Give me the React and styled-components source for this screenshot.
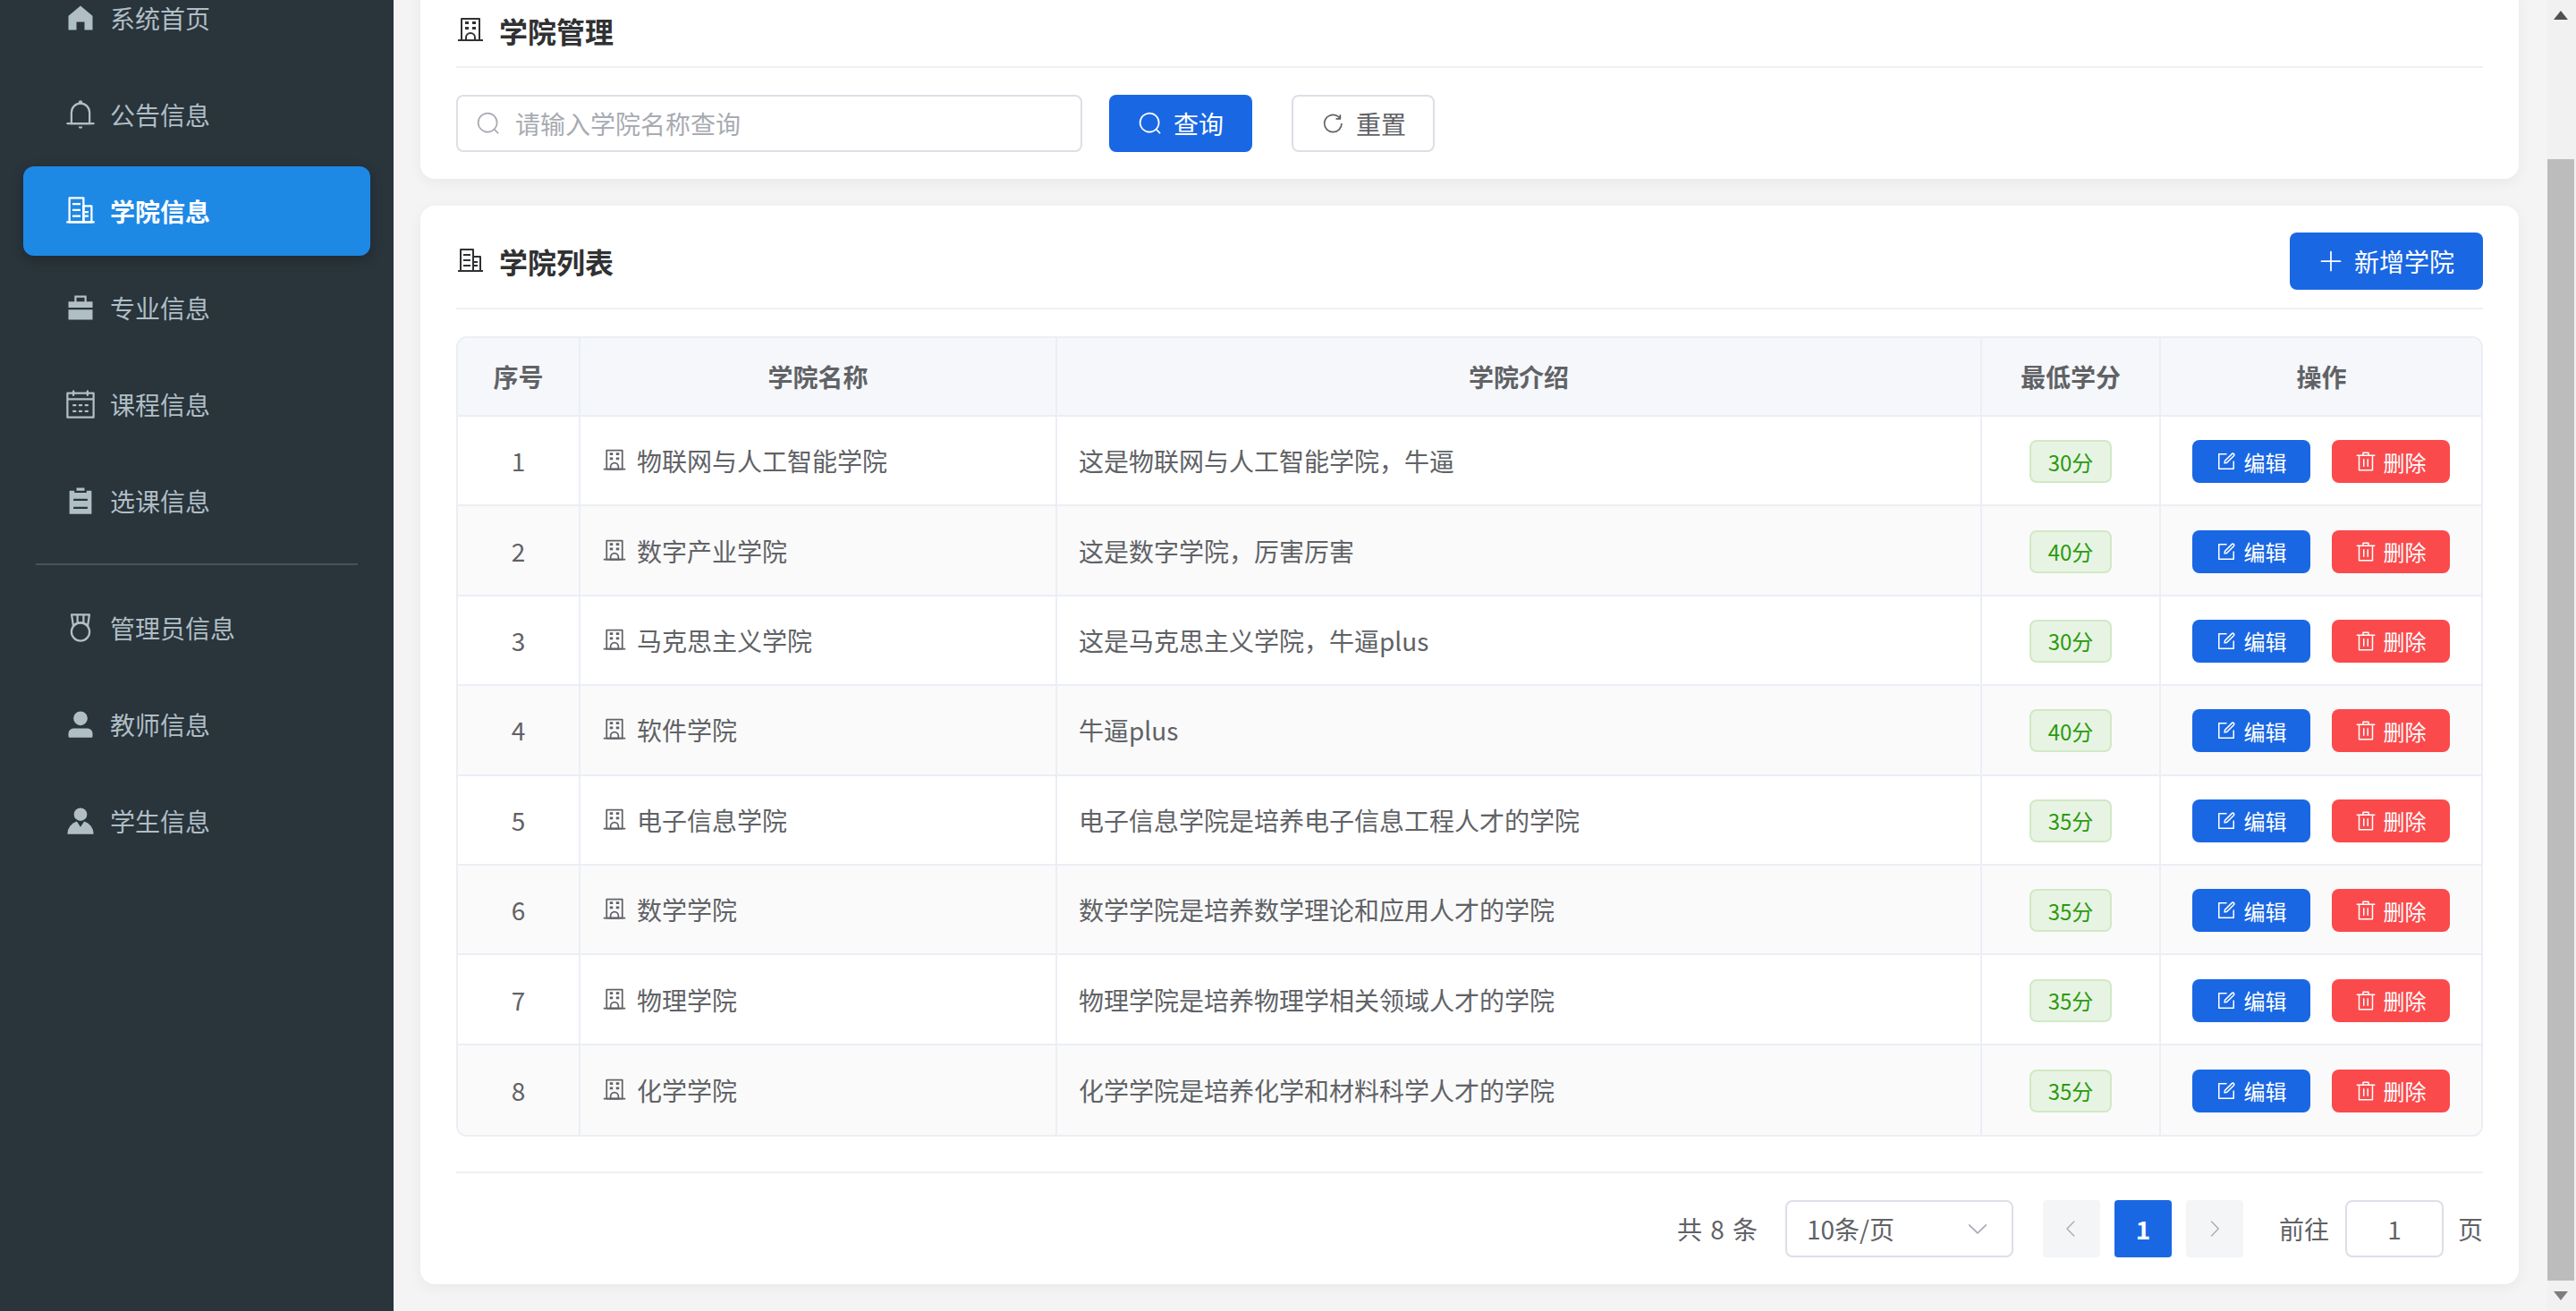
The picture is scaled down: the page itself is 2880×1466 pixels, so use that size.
import React from "react";
import styled, { createGlobalStyle } from "styled-components";

const Global = createGlobalStyle`
  html, body { margin: 0; padding: 0; }
  body { font-family: "Noto Sans CJK SC", "Liberation Sans", sans-serif; }
  * { box-sizing: border-box; }
`;

const Page = styled.div`
  display: flex;
  width: 2880px;
  height: 1466px;
  overflow: hidden;
  background: #f4f4f5;
`;
const Sidebar = styled.aside`
  flex: 0 0 440px;
  background: #29343b;
  padding: 0 26px;
  overflow: hidden;
`;
const Nav = styled.nav`
  display: flex;
  flex-direction: column;
  gap: 8px;
  margin-top: -30px;
`;
const NavItem = styled.a`
  display: flex;
  align-items: center;
  gap: 15px;
  height: 100px;
  padding-left: 46px;
  border-radius: 12px;
  font-size: 28px;
  font-weight: ${(p) => (p.$active ? 700 : 400)};
  color: ${(p) => (p.$active ? "#ffffff" : "#b0bec5")};
  background: ${(p) => (p.$active ? "#1e88e5" : "transparent")};
  box-shadow: ${(p) => (p.$active ? "0 4px 14px rgba(0,0,0,.22)" : "none")};
`;
const NavDivider = styled.div`
  height: 2px;
  margin: 12px 14px 12px;
  background: #47535b;
`;
const Icon = styled.svg`
  flex: none;
  width: ${(p) => p.$size}px;
  height: ${(p) => p.$size}px;
  fill: currentColor;
`;
const Main = styled.main`
  flex: 1;
  min-width: 0;
  display: flex;
  flex-direction: column;
  gap: 30px;
  margin-top: -18px;
  padding: 0 32px 0 30px;
`;
const Card = styled.section`
  background: #fff;
  border-radius: 16px;
  padding: 30px 40px;
  box-shadow: 0 4px 16px rgba(0, 0, 0, 0.05);
`;
const CardHeader = styled.header`
  display: flex;
  align-items: center;
  justify-content: space-between;
  padding-bottom: ${(p) => (p.$tight ? 18 : 20)}px;
  border-bottom: 2px solid #f0f0f0;
  margin-bottom: 30px;
`;
const CardTitle = styled.h2`
  display: flex;
  align-items: center;
  gap: 16px;
  margin: 0;
  height: 44px;
  font-size: 32px;
  line-height: 44px;
  font-weight: 700;
  color: #303133;
`;
const SearchBar = styled.div`
  display: flex;
  align-items: center;
`;
const SearchField = styled.div`
  display: flex;
  align-items: center;
  gap: 16px;
  width: 700px;
  height: 64px;
  padding: 0 20px;
  border: 2px solid #dcdfe6;
  border-radius: 8px;
  margin-right: 30px;
  color: #a8abb2;
  font-size: 28px;
`;
const SearchInput = styled.input`
  flex: 1;
  min-width: 0;
  border: 0;
  outline: 0;
  padding: 0;
  font: inherit;
  font-size: 28px;
  background: transparent;
  &::placeholder { color: #a8abb2; opacity: 1; }
`;
const Button = styled.button`
  display: inline-flex;
  align-items: center;
  justify-content: center;
  gap: 12px;
  height: 64px;
  width: ${(p) => p.$width || 160}px;
  padding: 0;
  border: ${(p) => (p.$plain ? "2px solid #dcdfe6" : "0")};
  border-radius: 8px;
  font: inherit;
  font-size: 28px;
  color: ${(p) => (p.$plain ? "#606266" : "#fff")};
  background: ${(p) => (p.$plain ? "#fff" : "#1a67e4")};
  & + & { margin-left: 44px; }
`;
const TableWrap = styled.div`
  border: 2px solid #ebeef5;
  border-radius: 12px;
  overflow: hidden;
`;
const Table = styled.table`
  width: 100%;
  table-layout: fixed;
  border-collapse: separate;
  border-spacing: 0;
  font-size: 28px;
  color: #606266;
`;
const Th = styled.th`
  height: 88px;
  padding: 0;
  font-weight: 700;
  text-align: center;
  background: #f5f7fa;
  border-bottom: 2px solid #ebeef5;
  border-right: 2px solid #ebeef5;
  &:last-child { border-right: 0; }
`;
const Row = styled.tr`
  height: 100.4px;
  background: ${(p) => (p.$striped ? "#fafafa" : "#fff")};
  &:last-child td { border-bottom: 0; }
`;
const Td = styled.td`
  padding: 0 24px;
  text-align: ${(p) => (p.$center ? "center" : "left")};
  border-bottom: 2px solid #ebeef5;
  border-right: 2px solid #ebeef5;
  &:last-child { border-right: 0; }
`;
const NameCell = styled.div`
  display: flex;
  align-items: center;
  gap: 11px;
`;
const Controls = styled.div`
  display: flex;
  justify-content: center;
  gap: 24px;
  margin-top: 2px;
  padding-right: ${(p) => (p.$nudge ? 2 : 0)}px;
`;
const Badge = styled.span`
  display: inline-flex;
  align-items: center;
  justify-content: center;
  width: 92px;
  height: 48px;
  border: 2px solid #d1e9c6;
  border-radius: 8px;
  background: #e8f4e3;
  color: #2b9a10;
  font-size: 24px;
`;
const ActionButton = styled.button`
  display: inline-flex;
  align-items: center;
  justify-content: center;
  gap: 8px;
  width: 132px;
  height: 48px;
  padding: 0;
  border: 0;
  border-radius: 8px;
  font: inherit;
  font-size: 24px;
  color: #fff;
  background: ${(p) => (p.$danger ? "#fa4a4c" : "#1a67e4")};
`;
const Footer = styled.footer`
  display: flex;
  align-items: center;
  justify-content: flex-end;
  margin-top: 39px;
  padding-top: 30px;
  border-top: 2px solid #f0f0f0;
  font-size: 28px;
  color: #606266;
`;
const Total = styled.span`
  margin-right: 31px;
  word-spacing: 3px;
`;
const PageSize = styled.div`
  display: flex;
  align-items: center;
  justify-content: space-between;
  width: 255px;
  height: 64px;
  padding: 0 24px 0 22px;
  margin-right: 33px;
  border: 2px solid #dcdfe6;
  border-radius: 8px;
  color: #a8abb2;
`;
const PageSizeLabel = styled.span`
  color: #606266;
`;
const Pager = styled.div`
  display: flex;
  gap: 16px;
  margin-right: 40px;
`;
const PageButton = styled.button`
  display: inline-flex;
  align-items: center;
  justify-content: center;
  width: 64px;
  height: 64px;
  padding: 0;
  border: 0;
  border-radius: 4px;
  font: inherit;
  font-size: 28px;
  font-weight: 700;
  color: ${(p) => (p.$active ? "#fff" : "#a8abb2")};
  background: ${(p) => (p.$active ? "#1a67e4" : "#f4f5f7")};
`;
const GoTo = styled.div`
  display: flex;
  align-items: center;
`;
const GoToInput = styled.div`
  display: flex;
  align-items: center;
  justify-content: center;
  width: 110px;
  height: 64px;
  margin: 0 16px 0 18px;
  border: 2px solid #dcdfe6;
  border-radius: 8px;
`;
const Scrollbar = styled.div`
  flex: 0 0 32px;
  display: flex;
  flex-direction: column;
  padding-right: 2px;
  background: #f1f1f1;
`;
const ScrollArrow = styled.div`
  flex: 0 0 34px;
  display: flex;
  align-items: center;
  justify-content: center;
  color: ${(p) => (p.$muted ? "#7d7d7d" : "#505050")};
`;
const ScrollTrack = styled.div`
  flex: 1;
  display: flex;
  padding-top: 144px;
`;
const ScrollThumb = styled.div`
  flex: 1;
  background: #bcbcbc;
`;

const P = {
  home: ["M512 128 128 447.936V896h255.936V640H640v256h255.936V447.936z"],
  bell: [
    "M512 64a64 64 0 0 1 64 64v64H448v-64a64 64 0 0 1 64-64",
    "M256 768h512V448a256 256 0 1 0-512 0zm256-640a320 320 0 0 1 320 320v384H192V448a320 320 0 0 1 320-320",
    "M96 768h832q32 0 32 32t-32 32H96q-32 0-32-32t32-32m352 128h128a64 64 0 0 1-128 0",
  ],
  office: [
    "M192 128v704h384V128zm-32-64h448a32 32 0 0 1 32 32v768a32 32 0 0 1-32 32H160a32 32 0 0 1-32-32V96a32 32 0 0 1 32-32",
    "M256 256h256v64H256zm0 192h256v64H256zm0 192h256v64H256zm384-128h128v64H640zm0 128h128v64H640zM64 832h896v64H64z",
    "M640 384v448h192V384zm-32-64h256a32 32 0 0 1 32 32v512a32 32 0 0 1-32 32H608a32 32 0 0 1-32-32V352a32 32 0 0 1 32-32",
  ],
  briefcase: ["M320 320V128h384v192h192v192H128V320zM128 576h768v320H128zm256-256h256.064V192H384z"],
  calendar: [
    "M128 384v512h768V192H768v32a32 32 0 1 1-64 0v-32H320v32a32 32 0 0 1-64 0v-32H128v128h768v64zm192-256h384V96a32 32 0 1 1 64 0v32h160a32 32 0 0 1 32 32v768a32 32 0 0 1-32 32H96a32 32 0 0 1-32-32V160a32 32 0 0 1 32-32h160V96a32 32 0 0 1 64 0zm-32 384h64a32 32 0 0 1 0 64h-64a32 32 0 0 1 0-64m0 192h64a32 32 0 1 1 0 64h-64a32 32 0 1 1 0-64m192-192h64a32 32 0 0 1 0 64h-64a32 32 0 0 1 0-64m0 192h64a32 32 0 1 1 0 64h-64a32 32 0 1 1 0-64m192-192h64a32 32 0 1 1 0 64h-64a32 32 0 1 1 0-64m0 192h64a32 32 0 1 1 0 64h-64a32 32 0 1 1 0-64",
  ],
  list: ["M704 192h160v736H160V192h160v64h384zM288 512h448v-64H288zm0 256h448v-64H288zm96-576V96h256v96z"],
  medal: [
    "M512 896a256 256 0 1 0 0-512 256 256 0 0 0 0 512m0 64a320 320 0 1 1 0-640 320 320 0 0 1 0 640",
    "M576 128H448v200a286.7 286.7 0 0 1 64-8c19.52 0 40.832 2.688 64 8zm64 0v219.648c24.448 9.088 50.56 20.416 78.4 33.92L757.44 128zm-256 0H266.624l39.04 253.568c27.84-13.504 53.952-24.832 78.336-33.92zM229.312 64h565.376a32 32 0 0 1 31.616 36.864L768 480c-113.792-64-199.104-96-256-96s-142.208 32-256 96l-58.304-379.136A32 32 0 0 1 229.312 64",
  ],
  user: ["M288 320a224 224 0 1 0 448 0 224 224 0 1 0-448 0m544 608H160a32 32 0 0 1-32-32v-96a160 160 0 0 1 160-160h448a160 160 0 0 1 160 160v96a32 32 0 0 1-32 32z"],
  avatar: ["M628.736 528.896A416 416 0 0 1 928 928H96a415.872 415.872 0 0 1 299.264-399.104L512 704zM720 304a208 208 0 1 1-416 0 208 208 0 0 1 416 0"],
  school: [
    "M224 128v704h576V128zm-32-64h640a32 32 0 0 1 32 32v768a32 32 0 0 1-32 32H192a32 32 0 0 1-32-32V96a32 32 0 0 1 32-32",
    "M64 832h896v64H64zm256-640h128v96H320z",
    "M384 832h256v-64a128 128 0 1 0-256 0zm128-256a192 192 0 0 1 192 192v128H320V768a192 192 0 0 1 192-192M320 384h128v96H320zm256-192h128v96H576zm0 192h128v96H576z",
  ],
  edit: [
    "M832 512a32 32 0 1 1 64 0v352a32 32 0 0 1-32 32H160a32 32 0 0 1-32-32V160a32 32 0 0 1 32-32h352a32 32 0 0 1 0 64H192v640h640z",
    "m469.952 554.24 52.8-7.552L847.104 222.4a32 32 0 1 0-45.248-45.248L477.44 501.44l-7.552 52.8zm422.4-422.4a96 96 0 0 1 0 135.808l-331.84 331.84a32 32 0 0 1-18.112 9.088L436.8 623.68a32 32 0 0 1-36.224-36.224l15.104-105.6a32 32 0 0 1 9.024-18.112l331.904-331.84a96 96 0 0 1 135.744 0z",
  ],
  del: ["M160 256H96a32 32 0 0 1 0-64h256V95.936a32 32 0 0 1 32-32h256a32 32 0 0 1 32 32V192h256a32 32 0 1 1 0 64h-64v672a32 32 0 0 1-32 32H192a32 32 0 0 1-32-32zm448-64v-64H416v64zM224 896h576V256H224zm192-128a32 32 0 0 1-32-32V416a32 32 0 0 1 64 0v320a32 32 0 0 1-32 32m192 0a32 32 0 0 1-32-32V416a32 32 0 0 1 64 0v320a32 32 0 0 1-32 32"],
  search: ["m795.904 750.72 124.992 124.928a32 32 0 0 1-45.248 45.248L750.656 795.904a416 416 0 1 1 45.248-45.248zM480 832a352 352 0 1 0 0-704 352 352 0 0 0 0 704"],
  refresh: ["M784.512 230.272v-50.56a32 32 0 1 1 64 0v149.056a32 32 0 0 1-32 32H667.52a32 32 0 1 1 0-64h92.992A320 320 0 1 0 524.8 833.152a320 320 0 0 0 320-320h64a384 384 0 0 1-384 384 384 384 0 0 1-384-384 384 384 0 0 1 643.712-282.88z"],
  plus: ["M480 480V128a32 32 0 0 1 64 0v352h352a32 32 0 1 1 0 64H544v352a32 32 0 1 1-64 0V544H128a32 32 0 0 1 0-64z"],
  down: ["M831.872 340.864 512 652.672 192.128 340.864a30.592 30.592 0 0 0-42.752 0 29.12 29.12 0 0 0 0 41.6L489.664 714.24a32 32 0 0 0 44.672 0l340.288-331.712a29.12 29.12 0 0 0 0-41.728 30.592 30.592 0 0 0-42.752 0z"],
  left: ["M609.408 149.376 277.76 489.6a32 32 0 0 0 0 44.672l331.648 340.352a29.12 29.12 0 0 0 41.728 0 30.592 30.592 0 0 0 0-42.752L339.2 512l312.96-319.872a30.592 30.592 0 0 0 0-42.752 29.12 29.12 0 0 0-41.728 0z"],
  right: ["M340.864 149.312a30.592 30.592 0 0 0 0 42.752L652.736 512 340.864 831.872a30.592 30.592 0 0 0 0 42.688 29.12 29.12 0 0 0 41.728 0L714.24 534.336a32 32 0 0 0 0-44.672L382.592 149.376a29.12 29.12 0 0 0-41.728 0z"],
};

const Glyph = ({ name, size = 36 }) => (
  <Icon $size={size} viewBox="0 0 1024 1024" aria-hidden="true">
    {P[name].map((d) => (
      <path key={d} d={d} />
    ))}
  </Icon>
);

const navTop = [
  ["home", "系统首页"],
  ["bell", "公告信息"],
  ["office", "学院信息", true],
  ["briefcase", "专业信息"],
  ["calendar", "课程信息"],
  ["list", "选课信息"],
];
const navBottom = [
  ["medal", "管理员信息"],
  ["user", "教师信息"],
  ["avatar", "学生信息"],
];
const rows = [
  ["物联网与人工智能学院", "这是物联网与人工智能学院，牛逼", 30],
  ["数字产业学院", "这是数字学院，厉害厉害", 40],
  ["马克思主义学院", "这是马克思主义学院，牛逼plus", 30],
  ["软件学院", "牛逼plus", 40],
  ["电子信息学院", "电子信息学院是培养电子信息工程人才的学院", 35],
  ["数学学院", "数学学院是培养数学理论和应用人才的学院", 35],
  ["物理学院", "物理学院是培养物理学相关领域人才的学院", 35],
  ["化学学院", "化学学院是培养化学和材料科学人才的学院", 35],
];
const colWidths = [137, 533, 1034, 200, 359];

const NavEntry = ({ icon, label, active }) => (
  <NavItem $active={active}>
    <Glyph name={icon} />
    {label}
  </NavItem>
);

export default function App() {
  return (
    <Page>
      <Global />
      <Sidebar>
        <Nav>
          {navTop.map(([i, l, a]) => (
            <NavEntry key={l} icon={i} label={l} active={a} />
          ))}
          <NavDivider />
          {navBottom.map(([i, l]) => (
            <NavEntry key={l} icon={i} label={l} />
          ))}
        </Nav>
      </Sidebar>
      <Main>
        <Card>
          <CardHeader $tight>
            <CardTitle>
              <Glyph name="school" size={32} />
              学院管理
            </CardTitle>
          </CardHeader>
          <SearchBar>
            <SearchField>
              <Glyph name="search" size={28} />
              <SearchInput placeholder="请输入学院名称查询" readOnly />
            </SearchField>
            <Button>
              <Glyph name="search" size={28} />
              查询
            </Button>
            <Button $plain>
              <Glyph name="refresh" size={28} />
              重置
            </Button>
          </SearchBar>
        </Card>
        <Card>
          <CardHeader>
            <CardTitle>
              <Glyph name="office" size={32} />
              学院列表
            </CardTitle>
            <Button $width={216}>
              <Glyph name="plus" size={28} />
              新增学院
            </Button>
          </CardHeader>
          <TableWrap>
            <Table>
              <colgroup>
                {colWidths.map((w, i) => (
                  <col key={i} width={w} />
                ))}
              </colgroup>
              <thead>
                <tr>
                  {["序号", "学院名称", "学院介绍", "最低学分", "操作"].map((h) => (
                    <Th key={h}>{h}</Th>
                  ))}
                </tr>
              </thead>
              <tbody>
                {rows.map(([name, intro, credit], i) => (
                  <Row key={name} $striped={i % 2 === 1}>
                    <Td $center>{i + 1}</Td>
                    <Td>
                      <NameCell>
                        <Glyph name="school" size={28} />
                        {name}
                      </NameCell>
                    </Td>
                    <Td>{intro}</Td>
                    <Td $center>
                      <Controls>
                        <Badge>{credit}分</Badge>
                      </Controls>
                    </Td>
                    <Td $center>
                      <Controls $nudge>
                        <ActionButton>
                          <Glyph name="edit" size={24} />
                          编辑
                        </ActionButton>
                        <ActionButton $danger>
                          <Glyph name="del" size={24} />
                          删除
                        </ActionButton>
                      </Controls>
                    </Td>
                  </Row>
                ))}
              </tbody>
            </Table>
          </TableWrap>
          <Footer>
            <Total>共 8 条</Total>
            <PageSize>
              <PageSizeLabel>10条/页</PageSizeLabel>
              <Glyph name="down" size={28} />
            </PageSize>
            <Pager>
              <PageButton aria-label="上一页">
                <Glyph name="left" size={24} />
              </PageButton>
              <PageButton $active>1</PageButton>
              <PageButton aria-label="下一页">
                <Glyph name="right" size={24} />
              </PageButton>
            </Pager>
            <GoTo>
              前往
              <GoToInput>1</GoToInput>
              页
            </GoTo>
          </Footer>
        </Card>
      </Main>
      <Scrollbar>
        <ScrollArrow>
          <svg width="16" height="10" viewBox="0 0 16 10"><path d="M8 0 16 10H0z" fill="currentColor" /></svg>
        </ScrollArrow>
        <ScrollTrack>
          <ScrollThumb />
        </ScrollTrack>
        <ScrollArrow $muted>
          <svg width="16" height="10" viewBox="0 0 16 10"><path d="M8 10 0 0H16z" fill="currentColor" /></svg>
        </ScrollArrow>
      </Scrollbar>
    </Page>
  );
}
